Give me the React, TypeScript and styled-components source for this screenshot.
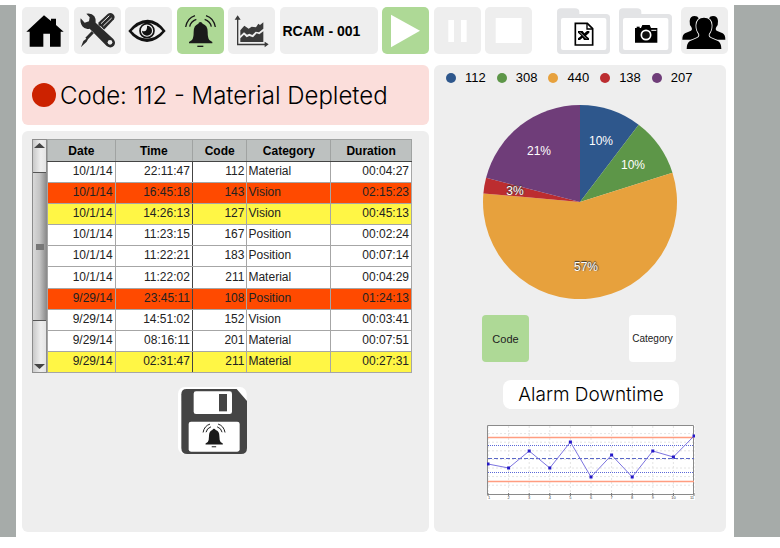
import React from "react";
import styled, { createGlobalStyle } from "styled-components";

const colors = {
  frame: "#a6aba9",
  panel: "#eeeeee",
  green: "#aed996",
  banner: "#fbdedb",
  ink: "#222222",
};

const GlobalStyle = createGlobalStyle`
  * { box-sizing: border-box; }
  body {
    margin: 0;
    background: #ffffff;
    color: #000000;
    font-family: "Liberation Sans", Arial, sans-serif;
  }
  button { font-family: inherit; color: inherit; }
`;

const Frame = styled.div`
  margin-top: 5px;
  background: ${colors.frame};
  padding: 0 46px 0 16px;
`;

const Screen = styled.main`
  background: #ffffff;
  padding: 2px 6px 5px;
`;

const Toolbar = styled.nav`
  display: flex;
  gap: 25px;
  height: 47px;
`;

const ToolGroup = styled.div`
  display: flex;
  flex: 1;
  justify-content: space-between;
`;

const FileGroup = styled.div`
  display: flex;
  gap: 9px;
`;

const ToolButton = styled.button<{ $active?: boolean; $wide?: boolean }>`
  width: ${(p) => (p.$wide ? "98px" : "47px")};
  height: 47px;
  padding: 0;
  border: 0;
  border-radius: 5px;
  background: ${(p) => (p.$active ? colors.green : colors.panel)};
  font-size: 14px;
  font-weight: bold;
  text-align: left;
  cursor: pointer;
  svg { display: block; }
`;

const MachineName = styled.span`
  padding-left: 3px;
`;

const FolderButton = styled.button`
  width: 53px;
  height: 47px;
  padding: 0;
  border: 0;
  background: transparent;
  cursor: pointer;
  svg { display: block; }
`;

const Columns = styled.div`
  display: grid;
  grid-template-columns: 407fr 292fr;
  gap: 5px;
  margin-top: 11px;
  padding-right: 2px;
`;

const LeftColumn = styled.div`
  display: flex;
  flex-direction: column;
  gap: 6px;
`;

const Banner = styled.header`
  display: flex;
  align-items: center;
  gap: 4px;
  height: 60px;
  padding: 0 10px;
  border-radius: 6px;
  background: ${colors.banner};
`;

const AlarmDot = styled.span`
  width: 24px;
  height: 24px;
  border-radius: 50%;
  background: #cc2200;
`;

const BannerTitle = styled.h1`
  margin: 0;
  padding-top: 2px;
  font-family: Inter, "Liberation Sans", sans-serif;
  font-size: 24px;
  font-weight: 300;
  line-height: 30px;
  white-space: nowrap;
`;

const Panel = styled.section`
  flex: 1;
  border-radius: 6px;
  background: ${colors.panel};
`;

const LogPanel = styled(Panel)`
  display: flex;
  flex-direction: column;
  align-items: center;
  gap: 14px;
  padding: 8px 17px 16px 10px;
`;

const LogArea = styled.div`
  display: flex;
  width: 100%;
`;

const ScrollTrack = styled.div`
  display: flex;
  flex-direction: column;
  width: 15px;
  border: 1px solid #8c8c8c;
  background: linear-gradient(to right, #c9c9c9, #eeeeee 60%, #e4e4e4);
`;

const ScrollArrow = styled.button`
  height: 10px;
  padding: 0;
  border: 0;
  background: transparent;
  svg { display: block; margin: 0 auto; }
`;

const ScrollLane = styled.div`
  flex: 1;
  padding: 22px 0 41px;
`;

const ScrollThumb = styled.div`
  display: flex;
  align-items: center;
  justify-content: center;
  height: 100%;
  border: 1px solid #555555;
  border-width: 1px 0;
  background: linear-gradient(to right, #d8d8d8, #c4c4c4 50%, #8f8f8f);
`;

const Grip = styled.span`
  width: 8px;
  height: 6px;
  background: #777777;
`;

const LogTable = styled.table`
  flex: 1;
  height: 234px;
  border-collapse: collapse;
  table-layout: fixed;
  font-size: 12px;
  line-height: 14px;
`;

const HeadCell = styled.th<{ $width: string }>`
  width: ${(p) => p.$width};
  height: 22px;
  padding: 0;
  border: 1px solid #a0a3a2;
  border-bottom-color: #444444;
  background: #bdc1c0;
`;

const LogRow = styled.tr<{ $tone?: string }>`
  background: ${(p) => p.$tone ?? "#ffffff"};
`;

const Cell = styled.td<{ $left?: boolean; $rule?: boolean }>`
  height: 21px;
  padding: 0 2px 2px 1px;
  border: 1px solid #a6a6a6;
  border-right-color: ${(p) => (p.$rule ? "#444444" : "#a6a6a6")};
  color: ${colors.ink};
  text-align: ${(p) => (p.$left ? "left" : "right")};
`;

const SaveButton = styled.button`
  width: 69px;
  height: 67px;
  padding: 0;
  margin-right: 20px;
  border: 0;
  background: transparent;
  cursor: pointer;
  svg { display: block; }
`;

const ChartPanel = styled(Panel)`
  display: flex;
  flex-direction: column;
  align-items: center;
  padding: 5px 12px 32px;
`;

const Legend = styled.ul`
  display: flex;
  align-self: flex-start;
  gap: 11px;
  margin: 0;
  padding: 0;
  list-style: none;
  font-size: 13px;
  line-height: 16px;
`;

const LegendItem = styled.li`
  display: flex;
  align-items: center;
  gap: 9px;
`;

const Swatch = styled.span<{ $color: string }>`
  width: 10px;
  height: 10px;
  border-radius: 50%;
  background: ${(p) => p.$color};
`;

const PieBox = styled.div`
  margin-top: 18px;
  svg { display: block; }
`;

const Toggles = styled.div`
  display: flex;
  justify-content: space-between;
  width: 194px;
  margin-top: 15px;
  margin-right: 2px;
`;

const ToggleButton = styled.button<{ $active?: boolean }>`
  width: 47px;
  height: 47px;
  padding: 0;
  border: 0;
  border-radius: 4px;
  background: ${(p) => (p.$active ? colors.green : "#ffffff")};
  color: ${colors.ink};
  font-size: ${(p) => (p.$active ? "11px" : "10px")};
  cursor: pointer;
`;

const Downtime = styled.div`
  display: flex;
  flex-direction: column;
  align-items: center;
  gap: 16px;
  margin-top: 18px;
  padding-left: 22px;
  svg { display: block; }
`;

const DowntimeTitle = styled.h2`
  margin: 0;
  padding: 1px 15px 0;
  border-radius: 8px;
  background: #ffffff;
  font-family: Inter, "Liberation Sans", sans-serif;
  font-size: 19px;
  font-weight: 300;
  line-height: 28px;
`;

const Icon = ({ children }: { children: React.ReactNode }) => (
  <svg width="47" height="47" viewBox="0 0 141 141" aria-hidden="true">
    {children}
  </svg>
);

const HomeIcon = () => (
  <Icon>
    <path d="M66 25 87 42V35H102V54L125 74H116V119H84V80H64V119H23V74H13Z" />
  </Icon>
);

const ToolsIcon = () => (
  <Icon>
    <g fill="#2b2b2b">
      <path d="M21 120 28 102 37 95 34 92 78 47 84 53 42 97 38 104Z" />
      <path d="M72 48 101 21Q109 15 117 21Q125 28 120 37L90 68Z" />
      <path d="M81 50 106 26M88 57 113 33" stroke="#eeeeee" strokeWidth="3" />
      <path
        d="M37 20Q53 17 61 28Q67 37 65 47L118 96Q127 106 120 116Q110 126 98 117L47 65Q34 69 25 58Q17 47 20 34L32 47 45 43 47 31Z"
        stroke="#eeeeee"
        strokeWidth="3"
        strokeLinejoin="round"
        paintOrder="stroke"
      />
      <circle cx="108" cy="106" r="7" fill="#eeeeee" />
    </g>
  </Icon>
);

const EyeIcon = () => (
  <Icon>
    <path d="M10 72Q36 38 68 38Q99 39 122 72Q96 104 66 105Q33 103 10 72Z" fill="#111111" />
    <path d="M20 72Q42 49 67 48Q93 49 112 72Q92 94 66 95Q39 94 20 72Z" fill="#eeeeee" />
    <circle cx="66" cy="71" r="21" fill="none" stroke="#111111" strokeWidth="5" />
    <path d="M66 56A15 15 0 1 1 51 71Q60 75 64 69 67 64 66 56Z" fill="#111111" />
  </Icon>
);

const BellShapes = () => (
  <g fill="#1a1a1a">
    <path d="M64 50Q65 45 70 45T77 50Q92 55 92 74Q92 92 97 99L106 105V109H36V105L45 99Q50 92 50 74Q50 55 64 50Z" />
    <path d="M61 116H79V120H61Z" />
    <g fill="none" stroke="#1a1a1a" strokeWidth="4">
      <path d="M26 60Q31 33 54 26" />
      <path d="M38 59Q41 43 58 37" />
      <path d="M115 60Q110 33 87 26" />
      <path d="M103 59Q100 43 83 37" />
    </g>
  </g>
);

const BellIcon = () => (
  <Icon>
    <BellShapes />
  </Icon>
);

const TrendIcon = () => (
  <Icon>
    <g fill="#3a3a3a">
      <path d="M27 36H31V110H112V115H27Z" />
      <path d="M20 38 29 25 38 38ZM110 104 122 112 110 121Z" />
      <path d="M37 70 49 56 62 65 71 59 84 61 91 50 96 54 106 46V65L93 76 83 74 73 84 64 80 57 83 48 76 37 86Z" />
      <path d="M37 94 48 83 56 91 64 87 75 91 86 79 94 82 106 73V105H37Z" />
    </g>
  </Icon>
);

const PlayIcon = () => (
  <Icon>
    <path d="M27 23 114 71 27 121Z" fill="#ffffff" />
  </Icon>
);

const PauseIcon = () => (
  <Icon>
    <path d="M43 39H60V105H43ZM81 39H98V105H81Z" fill="#ffffff" />
  </Icon>
);

const StopIcon = () => (
  <Icon>
    <path d="M32 33H110V108H32Z" fill="#ffffff" />
  </Icon>
);

const PeopleIcon = () => (
  <Icon>
    <path d="M4 98Q4 83 12 79L30 71Q35 68 31 60 25 54 26 42 27 27 41 27 50 27 53 34L53 98Z" />
    <path d="M133 98Q133 83 125 79L107 71Q102 68 106 60 112 54 111 42 110 27 96 27 87 27 84 34L84 98Z" />
    <path
      d="M17 126Q17 109 26 103L50 92Q57 88 54 80 46 72 46 55 47 33 69 32 91 33 92 55 92 72 84 80 81 88 88 92L112 103Q121 109 121 126Z"
      stroke="#eeeeee"
      strokeWidth="5"
      paintOrder="stroke"
    />
  </Icon>
);

const Folder = ({ children }: { children: React.ReactNode }) => (
  <svg width="53" height="47" viewBox="0 0 159 141" aria-hidden="true">
    <path d="M0 15Q0 4 12 4H54Q67 4 67 15V21H147Q159 21 159 32V129Q159 141 147 141H12Q0 141 0 129Z" fill="#e3e4e6" />
    <rect x="12" y="33" width="136" height="96" rx="6" fill="#ffffff" />
    {children}
  </svg>
);

const SheetFolderIcon = () => (
  <Folder>
    <path d="M55 49H91L107 65V114H55Z" fill="none" stroke="#000000" strokeWidth="5" />
    <path d="M90 49V66H107" fill="none" stroke="#000000" strokeWidth="4" />
    <path d="M63 72H77L82 79 90 72H97V77L87 86 96 94V99H81L77 92 69 99H63V94L73 86 63 77Z" />
    <path d="M69 76 88 95" stroke="#ffffff" strokeWidth="2" />
  </Folder>
);

const CameraFolderIcon = () => (
  <Folder>
    <path d="M48 63H66L70 54H92L96 63H115V107H48Z" />
    <path d="M53 59H62V63H53Z" />
    <circle cx="81" cy="84" r="14" fill="#111111" stroke="#ffffff" strokeWidth="5" />
    <path d="M97 70H112" stroke="#ffffff" strokeWidth="3" />
  </Folder>
);

const SaveIcon = () => (
  <svg width="69" height="67" viewBox="0 0 207 201" aria-hidden="true">
    <rect x="0" y="0" width="206" height="201" rx="20" fill="#ffffff" />
    <path d="M26 6H176L207 42V183Q207 201 189 201H28Q10 201 10 183V22Q10 6 26 6Z" fill="#444444" />
    <rect x="47" y="13" width="115" height="68" rx="7" fill="#ffffff" />
    <rect x="123" y="21" width="24" height="52" fill="#444444" />
    <rect x="32" y="104" width="153" height="90" rx="7" fill="#ffffff" />
    <g transform="translate(56 92) scale(0.74)">
      <BellShapes />
    </g>
  </svg>
);

type Entry = [date: string, time: string, code: string, category: string, duration: string, tone?: string];

const RED = "#ff4a00";
const YELLOW = "#fff645";

const entries: Entry[] = [
  ["10/1/14", "22:11:47", "112", "Material", "00:04:27"],
  ["10/1/14", "16:45:18", "143", "Vision", "02:15:23", RED],
  ["10/1/14", "14:26:13", "127", "Vision", "00:45:13", YELLOW],
  ["10/1/14", "11:23:15", "167", "Position", "00:02:24"],
  ["10/1/14", "11:22:21", "183", "Position", "00:07:14"],
  ["10/1/14", "11:22:02", "211", "Material", "00:04:29"],
  ["9/29/14", "23:45:11", "108", "Position", "01:24:13", RED],
  ["9/29/14", "14:51:02", "152", "Vision", "00:03:41"],
  ["9/29/14", "08:16:11", "201", "Material", "00:07:51"],
  ["9/29/14", "02:31:47", "211", "Material", "00:27:31", YELLOW],
];

const headings: [string, string][] = [
  ["Date", "18.6%"],
  ["Time", "21.2%"],
  ["Code", "15%"],
  ["Category", "23%"],
  ["Duration", "22.2%"],
];

const slices = [
  { code: "112", color: "#2e578c", from: 0, to: 37.2, label: "10%", x: 119, y: 41 },
  { code: "308", color: "#5d9648", from: 37.2, to: 72.4, label: "10%", x: 151, y: 65 },
  { code: "440", color: "#e7a13d", from: 72.4, to: 275.1, label: "57%", x: 104, y: 167, outlined: true },
  { code: "138", color: "#bc2d30", from: 275.1, to: 284.5, label: "3%", x: 33, y: 91, outlined: true },
  { code: "207", color: "#6f3d79", from: 284.5, to: 360, label: "21%", x: 57, y: 51 },
];

const PIE_CENTER = 98;
const PIE_RADIUS = 97;

const pointAt = (degrees: number) => {
  const a = (degrees * Math.PI) / 180;
  return `${PIE_CENTER + PIE_RADIUS * Math.sin(a)} ${PIE_CENTER - PIE_RADIUS * Math.cos(a)}`;
};

const PieLabel = styled.text<{ $outlined?: boolean }>`
  fill: #ffffff;
  font-size: 12px;
  text-anchor: middle;
  text-shadow: ${(p) => (p.$outlined ? "0 -1px 1px #333333, 1px 0 1px #555555" : "none")};
`;

const PieChart = () => (
  <svg width="196" height="196" viewBox="0 0 196 196" role="img" aria-label="Alarm share by code">
    {slices.map((s) => (
      <path
        key={s.code}
        d={`M${PIE_CENTER} ${PIE_CENTER}L${pointAt(s.from)}A${PIE_RADIUS} ${PIE_RADIUS} 0 ${s.to - s.from > 180 ? 1 : 0} 1 ${pointAt(s.to)}Z`}
        fill={s.color}
      />
    ))}
    {slices.map((s) => (
      <PieLabel key={s.code} x={s.x} y={s.y} $outlined={s.outlined}>
        {s.label}
      </PieLabel>
    ))}
  </svg>
);

const levels = [39, 43, 26, 43, 17, 52, 30, 52, 26, 32, 11];
const levelX = (i: number) => 1 + i * 20.6;

const TickText = styled.text`
  fill: #444444;
  font-size: 4px;
  text-anchor: middle;
`;

const TrendChart = () => (
  <svg width="208" height="75" viewBox="0 0 208 75" role="img" aria-label="Alarm downtime trend">
    <rect width="208" height="75" fill="#ffffff" />
    <g stroke="#e4e4e4" strokeWidth="1" strokeDasharray="2 2">
      {levels.map((_, i) => (
        <path key={i} d={`M${levelX(i)} 1V69`} />
      ))}
      {[1, 2, 3, 4, 5, 6, 7].map((n) => (
        <path key={n} d={`M1 ${n * 8.6}H207`} />
      ))}
    </g>
    <path d="M.5 69.5V.5H206.5V69.5Z" fill="none" stroke="#8a8a8a" />
    <path d="M1 12.5H207M1 56.5H207" stroke="#ff9d80" strokeWidth="1.5" />
    <path d="M1 20.5H207M1 47.5H207" stroke="#5a68d8" strokeDasharray="1 1" />
    <path d="M1 33.5H207" stroke="#5a68c8" strokeDasharray="4 2" />
    <polyline points={levels.map((y, i) => `${levelX(i)},${y}`).join(" ")} fill="none" stroke="#7c74e0" />
    {levels.map((y, i) => (
      <React.Fragment key={i}>
        <rect x={levelX(i) - 1.5} y={y - 1.5} width="3" height="3" fill="#2418c8" />
        <path d={`M${levelX(i)} 68V71`} stroke="#777777" />
        <TickText x={Math.min(Math.max(levelX(i), 2), 205)} y="74">
          {i + 1}
        </TickText>
      </React.Fragment>
    ))}
  </svg>
);

export default function App() {
  return (
    <>
      <GlobalStyle />
      <Frame>
        <Screen>
          <Toolbar aria-label="Main">
            <ToolGroup>
              <ToolButton aria-label="Home"><HomeIcon /></ToolButton>
              <ToolButton aria-label="Maintenance"><ToolsIcon /></ToolButton>
              <ToolButton aria-label="Vision"><EyeIcon /></ToolButton>
              <ToolButton aria-label="Alarms" $active><BellIcon /></ToolButton>
              <ToolButton aria-label="Trends"><TrendIcon /></ToolButton>
              <ToolButton $wide><MachineName>RCAM - 001</MachineName></ToolButton>
              <ToolButton aria-label="Play" $active><PlayIcon /></ToolButton>
              <ToolButton aria-label="Pause"><PauseIcon /></ToolButton>
              <ToolButton aria-label="Stop"><StopIcon /></ToolButton>
            </ToolGroup>
            <FileGroup>
              <FolderButton aria-label="Spreadsheets"><SheetFolderIcon /></FolderButton>
              <FolderButton aria-label="Pictures"><CameraFolderIcon /></FolderButton>
              <ToolButton aria-label="Users"><PeopleIcon /></ToolButton>
            </FileGroup>
          </Toolbar>

          <Columns>
            <LeftColumn>
              <Banner>
                <AlarmDot />
                <BannerTitle>Code: 112 - Material Depleted</BannerTitle>
              </Banner>
              <LogPanel>
                <LogArea>
                  <ScrollTrack>
                    <ScrollArrow aria-label="Scroll up">
                      <svg width="11" height="6" viewBox="0 0 11 6"><path d="M0 6 5.5 1 11 6Z" fill="#444444" /></svg>
                    </ScrollArrow>
                    <ScrollLane>
                      <ScrollThumb><Grip /></ScrollThumb>
                    </ScrollLane>
                    <ScrollArrow aria-label="Scroll down">
                      <svg width="11" height="6" viewBox="0 0 11 6"><path d="M0 0 5.5 5 11 0Z" fill="#444444" /></svg>
                    </ScrollArrow>
                  </ScrollTrack>
                  <LogTable>
                    <thead>
                      <tr>
                        {headings.map(([name, width]) => (
                          <HeadCell key={name} scope="col" $width={width}>{name}</HeadCell>
                        ))}
                      </tr>
                    </thead>
                    <tbody>
                      {entries.map(([date, time, code, category, duration, tone]) => (
                        <LogRow key={date + time} $tone={tone}>
                          <Cell>{date}</Cell>
                          <Cell $rule>{time}</Cell>
                          <Cell>{code}</Cell>
                          <Cell $left>{category}</Cell>
                          <Cell>{duration}</Cell>
                        </LogRow>
                      ))}
                    </tbody>
                  </LogTable>
                </LogArea>
                <SaveButton aria-label="Save alarms"><SaveIcon /></SaveButton>
              </LogPanel>
            </LeftColumn>

            <ChartPanel>
              <Legend>
                {slices.map((s) => (
                  <LegendItem key={s.code}>
                    <Swatch $color={s.color} />
                    {s.code}
                  </LegendItem>
                ))}
              </Legend>
              <PieBox><PieChart /></PieBox>
              <Toggles>
                <ToggleButton $active aria-pressed="true">Code</ToggleButton>
                <ToggleButton aria-pressed="false">Category</ToggleButton>
              </Toggles>
              <Downtime>
                <DowntimeTitle>Alarm Downtime</DowntimeTitle>
                <TrendChart />
              </Downtime>
            </ChartPanel>
          </Columns>
        </Screen>
      </Frame>
    </>
  );
}
